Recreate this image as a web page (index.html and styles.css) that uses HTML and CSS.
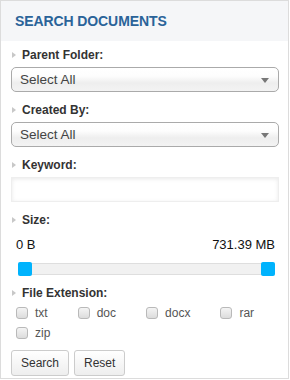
FILE: index.html
```html
<!DOCTYPE html>
<html>
<head>
<meta charset="utf-8">
<link rel="stylesheet" href="styles.css">
</head>
<body>
<div class="panel">
  <div class="panel-head">SEARCH DOCUMENTS</div>
  <div class="panel-body">
    <div class="group">
      <div class="label">Parent Folder:</div>
      <div class="select"><span>Select All</span><span class="caret"></span></div>
    </div>
    <div class="group">
      <div class="label">Created By:</div>
      <div class="select"><span>Select All</span><span class="caret"></span></div>
    </div>
    <div class="group">
      <div class="label">Keyword:</div>
      <div class="input"></div>
    </div>
    <div class="group size">
      <div class="label">Size:</div>
      <div class="values"><span>0 B</span><span>731.39 MB</span></div>
      <div class="slider">
        <div class="track"></div>
        <div class="handle left"></div>
        <div class="handle right"></div>
      </div>
    </div>
    <div class="label ext">File Extension:</div>
    <div class="checks">
      <div class="check"><span class="box"></span>txt</div>
      <div class="check"><span class="box"></span>doc</div>
      <div class="check"><span class="box"></span>docx</div>
      <div class="check"><span class="box"></span>rar</div>
      <div class="check"><span class="box"></span>zip</div>
    </div>
    <div class="buttons">
      <div class="btn">Search</div>
      <div class="btn">Reset</div>
    </div>
  </div>
</div>
</body>
</html>
```
FILE: styles.css
```css
* { box-sizing: border-box; }
html, body { margin: 0; padding: 0; background: #fff; }
body { font-family: "Liberation Sans", Arial, sans-serif; }
.panel {
  width: 289px;
  height: 379px;
  border: 1px solid #dcdcdc;
}
.panel-head {
  height: 40px;
  background: #f5f6f8;
  color: #2a6399;
  font-weight: bold;
  font-size: 14px;
  line-height: 40px;
  padding-left: 14px;
  letter-spacing: -0.1px;
}
.panel-body {
  padding: 6px 9px 0 10px;
  display: flex;
  flex-direction: column;
}
.group { display: flex; flex-direction: column; margin-bottom: 10px; }
.label {
  position: relative;
  font-size: 12px;
  font-weight: bold;
  color: #333;
  line-height: 16px;
  padding-left: 11px;
  margin-bottom: 4px;
}
.label::before {
  content: "";
  position: absolute;
  left: 1px;
  top: 5px;
  border-left: 4px solid #c8c8c8;
  border-top: 3px solid transparent;
  border-bottom: 3px solid transparent;
}
.select {
  height: 25px;
  border: 1px solid #aaa;
  border-radius: 5px;
  background: linear-gradient(#ffffff 0%, #fdfdfd 35%, #eeeeee 65%, #f3f3f3 100%);
  display: flex;
  align-items: center;
  justify-content: space-between;
  padding: 0 9px 0 8px;
  font-size: 13.5px;
  color: #444;
}
.caret {
  width: 0; height: 0;
  border-top: 5px solid #777;
  border-left: 4px solid transparent;
  border-right: 4px solid transparent;
  margin-top: 1px;
}
.input {
  height: 25px;
  border: 1px solid #eeeeee;
  background: #fff;
  box-shadow: inset 0 1px 4px rgba(0,0,0,0.09);
}
.size { margin-bottom: 9px; }
.size .label { margin-bottom: 9px; }
.values {
  display: flex;
  justify-content: space-between;
  font-size: 13px;
  line-height: 16px;
  color: #111;
  padding: 0 4px 0 5px;
  margin-bottom: 9px;
}
.slider {
  position: relative;
  height: 14px;
  margin: 0 4px 0 7px;
}
.track {
  position: absolute;
  left: 0; right: 0; top: 1px; bottom: 1px;
  background: #f1f1f1;
  border: 1px solid #dedede;
  border-radius: 2px;
}
.handle {
  position: absolute;
  top: 0;
  width: 14px;
  height: 14px;
  background: #00b3fd;
  border-radius: 2px;
}
.handle.left { left: 0; }
.handle.right { right: 0; }
.label.ext { margin-bottom: 2px; }
.checks {
  display: flex;
  flex-wrap: wrap;
  column-gap: 30px;
  padding-left: 5px;
}
.check {
  display: flex;
  align-items: center;
  height: 20px;
  font-size: 12px;
  color: #555;
}
.box {
  width: 12px;
  height: 12px;
  border: 1px solid #b9b9b9;
  border-radius: 3px;
  background: linear-gradient(#f4f4f4, #dcdcdc);
  margin-right: 7px;
}
.buttons {
  display: flex;
  gap: 5px;
  margin-top: 7px;
}
.btn {
  height: 26px;
  line-height: 24px;
  padding: 0 9px;
  border: 1px solid #cccccc;
  border-radius: 3px;
  background: linear-gradient(#ffffff, #eeeeee);
  font-size: 12px;
  color: #333;
}
```
